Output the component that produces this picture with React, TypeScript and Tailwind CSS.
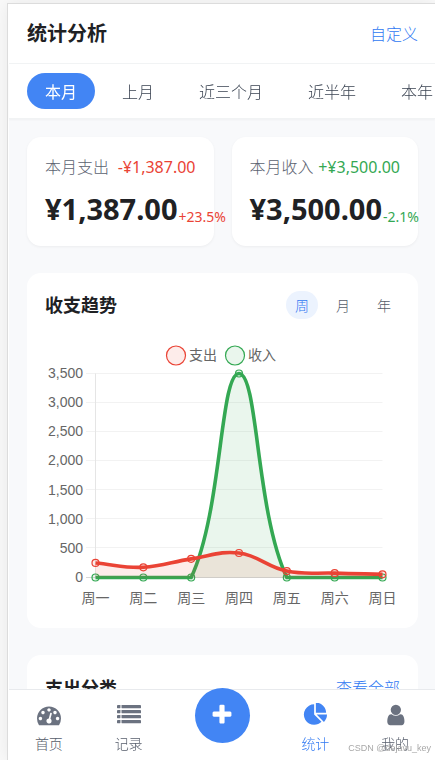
import type { ReactNode } from "react";

const PERIODS = ["本月", "上月", "近三个月", "近半年", "本年"];
const RANGES = ["周", "月", "年"];
const DAYS = ["周一", "周二", "周三", "周四", "周五", "周六", "周日"];
const EXPENSE = [250, 175, 320, 420, 110, 75, 55];
const INCOME = [0, 0, 0, 3500, 0, 0, 0];
const TICKS = [3500, 3000, 2500, 2000, 1500, 1000, 500, 0];

const RED = "#ea4335";
const GREEN = "#34a853";

type Point = { x: number; y: number };

const AREA = { left: 50.5, right: 337.5, top: 33.5, bottom: 237.5 };
const toY = (v: number) => AREA.bottom - (v / 3500) * (AREA.bottom - AREA.top);
const toX = (i: number) => AREA.left + (i * (AREA.right - AREA.left)) / 6;
const clampY = (y: number) => Math.min(AREA.bottom, Math.max(AREA.top, y));

// Smooth curve whose control points stay inside the plot area.
function curve(points: Point[], tension = 0.4): string {
  const controls = points.map((p, i) => {
    const prev = points[i - 1] ?? p;
    const next = points[i + 1] ?? p;
    const d1 = Math.hypot(p.x - prev.x, p.y - prev.y);
    const d2 = Math.hypot(next.x - p.x, next.y - p.y);
    const a = (tension * d1) / (d1 + d2);
    const b = (tension * d2) / (d1 + d2);
    return {
      before: { x: p.x - a * (next.x - prev.x), y: clampY(p.y - a * (next.y - prev.y)) },
      after: { x: p.x + b * (next.x - prev.x), y: clampY(p.y + b * (next.y - prev.y)) },
    };
  });
  return points
    .map((p, i) => {
      if (i === 0) return `M${p.x} ${p.y}`;
      const c1 = controls[i - 1].after;
      const c2 = controls[i].before;
      return `C${c1.x} ${c1.y} ${c2.x} ${c2.y} ${p.x} ${p.y}`;
    })
    .join(" ");
}

function Series({ values, color }: { values: number[]; color: string }) {
  const points = values.map((v, i) => ({ x: toX(i), y: toY(v) }));
  const line = curve(points);
  return (
    <g>
      <path d={`${line} L${AREA.right} ${AREA.bottom} L${AREA.left} ${AREA.bottom} Z`} fill={color} fillOpacity={0.1} />
      <path d={line} fill="none" stroke={color} strokeWidth={3.6} />
      {points.map((p) => (
        <circle key={p.x} cx={p.x} cy={p.y} r={3.5} fill={color} fillOpacity={0.1} stroke={color} strokeWidth={1.2} />
      ))}
    </g>
  );
}

function TrendChart() {
  return (
    <svg
      viewBox="0 0 355 270"
      role="img"
      aria-label="收支趋势"
      className="block h-auto w-full font-['Liberation_Sans','Noto_Sans_CJK_SC',sans-serif] text-[14px]"
    >
      <circle cx={131} cy={15.5} r={9.5} fill={RED} fillOpacity={0.1} stroke={RED} strokeWidth={1.2} />
      <text x={144} y={20} fill="#666">支出</text>
      <circle cx={190} cy={15.5} r={9.5} fill={GREEN} fillOpacity={0.1} stroke={GREEN} strokeWidth={1.2} />
      <text x={203} y={20} fill="#666">收入</text>
      {TICKS.map((t) => (
        <g key={t}>
          <line
            x1={41}
            x2={AREA.right}
            y1={Math.round(toY(t)) - 0.5}
            y2={Math.round(toY(t)) - 0.5}
            stroke={t === 0 ? "#d8d8d8" : "#f2f2f2"}
          />
          <text x={38} y={toY(t) + 4.5} textAnchor="end" fill="#666">
            {t.toLocaleString("en-US")}
          </text>
        </g>
      ))}
      <line x1={AREA.left} x2={AREA.left} y1={AREA.top} y2={AREA.bottom} stroke="#e5e5e5" />
      <Series values={INCOME} color={GREEN} />
      <Series values={EXPENSE} color={RED} />
      {DAYS.map((d, i) => (
        <text key={d} x={toX(i)} y={263} textAnchor="middle" fill="#666">
          {d}
        </text>
      ))}
    </svg>
  );
}

function Glyph({ viewBox = "0 0 1792 1792", children }: { viewBox?: string; children: ReactNode }) {
  return (
    <svg viewBox={viewBox} className="size-6 fill-current" aria-hidden="true">
      {children}
    </svg>
  );
}

const Dashboard = () => (
  <Glyph>
    <path d="M384 1152q0-53-37.5-90.5t-90.5-37.5-90.5 37.5-37.5 90.5 37.5 90.5 90.5 37.5 90.5-37.5 37.5-90.5zm192-448q0-53-37.5-90.5t-90.5-37.5-90.5 37.5-37.5 90.5 37.5 90.5 90.5 37.5 90.5-37.5 37.5-90.5zm428 481l101-382q6-26-7.5-48.5t-38.5-29.5-48 6.5-30 39.5l-101 382q-60 5-107 43.5t-63 98.5q-20 77 20 146t117 89 146-20 89-117q16-60-6-117t-72-91zm660-33q0-53-37.5-90.5t-90.5-37.5-90.5 37.5-37.5 90.5 37.5 90.5 90.5 37.5 90.5-37.5 37.5-90.5zm-640-640q0-53-37.5-90.5t-90.5-37.5-90.5 37.5-37.5 90.5 37.5 90.5 90.5 37.5 90.5-37.5 37.5-90.5zm448 192q0-53-37.5-90.5t-90.5-37.5-90.5 37.5-37.5 90.5 37.5 90.5 90.5 37.5 90.5-37.5 37.5-90.5zm320 448q0 261-141 483-19 29-54 29h-1402q-35 0-54-29-141-221-141-483 0-182 71-348t191-286 286-191 348-71 348 71 286 191 191 286 71 348z" />
  </Glyph>
);

const List = () => (
  <Glyph>
    {[150, 523, 896, 1269].map((y) => (
      <g key={y}>
        <rect x="0" y={y} width="256" height="240" rx="32" />
        <rect x="336" y={y} width="1456" height="240" rx="32" />
      </g>
    ))}
  </Glyph>
);

const Plus = () => (
  <Glyph>
    <path d="M1600 736v192q0 40-28 68t-68 28h-416v416q0 40-28 68t-68 28h-192q-40 0-68-28t-28-68v-416h-416q-40 0-68-28t-28-68v-192q0-40 28-68t68-28h416v-416q0-40 28-68t68-28h192q40 0 68 28t28 68v416h416q40 0 68 28t28 68z" />
  </Glyph>
);

const Pie = () => (
  <Glyph viewBox="-64 32 1792 1792">
    <path d="M768 890l546 546q-106 108-247.5 168t-298.5 60q-209 0-385.5-103t-279.5-279.5-103-385.5 103-385.5 279.5-279.5 385.5-103v762zm187 6h773q0 157-60 298.5t-168 247.5zm709-128h-768v-768q209 0 385.5 103t279.5 279.5 103 385.5z" />
  </Glyph>
);

const User = () => (
  <Glyph viewBox="-64 0 1792 1792">
    <path d="M1536 1399q0 109-62.5 187t-150.5 78h-854q-88 0-150.5-78t-62.5-187q0-85 8.5-160.5t31.5-152 58.5-131 94-89 134.5-34.5q131 128 313 128t313-128q76 0 134.5 34.5t94 89 58.5 131 31.5 152 8.5 160.5zm-256-887q0 159-112.5 271.5t-271.5 112.5-271.5-112.5-112.5-271.5 112.5-271.5 271.5-112.5 271.5 112.5 112.5 271.5z" />
  </Glyph>
);

function StatCard(props: { label: string; delta: string; total: string; rate: string; tone: string }) {
  return (
    <section className="min-w-0 rounded-[14px] bg-white p-[18px] shadow-[0_1px_3px_rgba(0,0,0,0.05)]">
      <div className="flex justify-between text-base leading-6 whitespace-nowrap">
        <span className="font-light text-[#5b6270]">{props.label}</span>
        <span className={props.tone}>{props.delta}</span>
      </div>
      <div className="mt-[11px] flex items-end whitespace-nowrap">
        <span className="text-[29px] leading-[38px] font-bold text-[#202124]">{props.total}</span>
        <span className={`ml-px text-[14px] leading-[22px] ${props.tone}`}>{props.rate}</span>
      </div>
    </section>
  );
}

function NavItem({ label, active, children }: { label: string; active?: boolean; children: ReactNode }) {
  return (
    <a
      href="#"
      aria-current={active ? "page" : undefined}
      className={`flex flex-1 flex-col items-center gap-[7px] pt-[13px] text-[14px] leading-5 font-light ${active ? "text-[#4285f4]" : "text-[#6b7280]"}`}
    >
      {children}
      <span className={active ? "text-[#2f78f2]" : "text-[#565d6b]"}>{label}</span>
    </a>
  );
}

export default function App() {
  return (
    <div className="h-screen overflow-hidden bg-[#fafafa] pt-[3px] pl-[7px] font-['Noto_Sans','Noto_Sans_CJK_SC',sans-serif] text-[#202124]">
      <div className="relative flex h-full flex-col border-t border-l border-[#dcdcdc] bg-white pl-px shadow-[0_0_18px_rgba(0,0,0,0.08)]">
        <header className="flex h-[60px] shrink-0 items-center justify-between border-b border-[#f1f3f4] pr-[17px] pl-[18px]">
          <h1 className="pt-px text-xl font-bold">统计分析</h1>
          <button type="button" className="text-base font-light text-[#2f78f2]">自定义</button>
        </header>
        <div className="z-10 flex shrink-0 gap-[9px] overflow-hidden border-b border-[#f1f3f4] bg-white px-[18px] py-[9px] shadow-[0_1px_2px_rgba(0,0,0,0.04)]">
          {PERIODS.map((p, i) => (
            <button
              key={p}
              type="button"
              className={`h-9 shrink-0 rounded-full px-[18px] pt-[2px] text-base whitespace-nowrap ${i === 0 ? "bg-[#4285f4] font-normal text-white" : "font-light text-[#3b4452]"}`}
            >
              {p}
            </button>
          ))}
        </div>

        <main className="flex min-h-0 flex-1 flex-col gap-[27px] overflow-y-auto bg-[#f8f9fb] py-[18px] pr-[17px] pl-[18px] [scrollbar-width:none]">
          <div className="grid shrink-0 grid-cols-2 gap-[18px]">
            <StatCard label="本月支出" delta="-¥1,387.00" total="¥1,387.00" rate="+23.5%" tone="text-[#ea4335]" />
            <StatCard label="本月收入" delta="+¥3,500.00" total="¥3,500.00" rate="-2.1%" tone="text-[#34a853]" />
          </div>

          <section className="shrink-0 rounded-[14px] bg-white p-[18px]">
            <div className="mb-[21px] flex items-center justify-between">
              <h2 className="text-lg leading-7 font-bold">收支趋势</h2>
              <div className="flex gap-[9px]">
                {RANGES.map((r, i) => (
                  <button
                    key={r}
                    type="button"
                    className={`h-7 rounded-full px-[9px] text-[14px] font-light ${i === 0 ? "bg-[#ecf3fe] text-[#2f78f2]" : "text-[#565d6b]"}`}
                  >
                    {r}
                  </button>
                ))}
              </div>
            </div>
            <TrendChart />
          </section>

          <section className="shrink-0 rounded-[14px] bg-white p-[18px]">
            <div className="flex items-center justify-between pt-px">
              <h2 className="text-lg leading-7 font-bold">支出分类</h2>
              <a href="#" className="text-base font-light text-[#2f78f2]">查看全部</a>
            </div>
          </section>
        </main>

        <nav className="z-10 flex h-[71px] shrink-0 border-t border-[#e8eaed] bg-white">
          <NavItem label="首页"><Dashboard /></NavItem>
          <NavItem label="记录"><List /></NavItem>
          <div className="-mt-[2px] flex w-[107px] justify-center">
            <button
              type="button"
              aria-label="记一笔"
              className="flex size-[55px] items-center justify-center rounded-full bg-[#4285f4] pb-[2px] text-white"
            >
              <Plus />
            </button>
          </div>
          <NavItem label="统计" active><Pie /></NavItem>
          <NavItem label="我的"><User /></NavItem>
        </nav>
        <p className="pointer-events-none absolute right-1 bottom-1 z-20 font-['Liberation_Sans',sans-serif] text-[9px] leading-4 text-[#a8a8a8]">
          CSDN @dejavu_key
        </p>
      </div>
    </div>
  );
}
